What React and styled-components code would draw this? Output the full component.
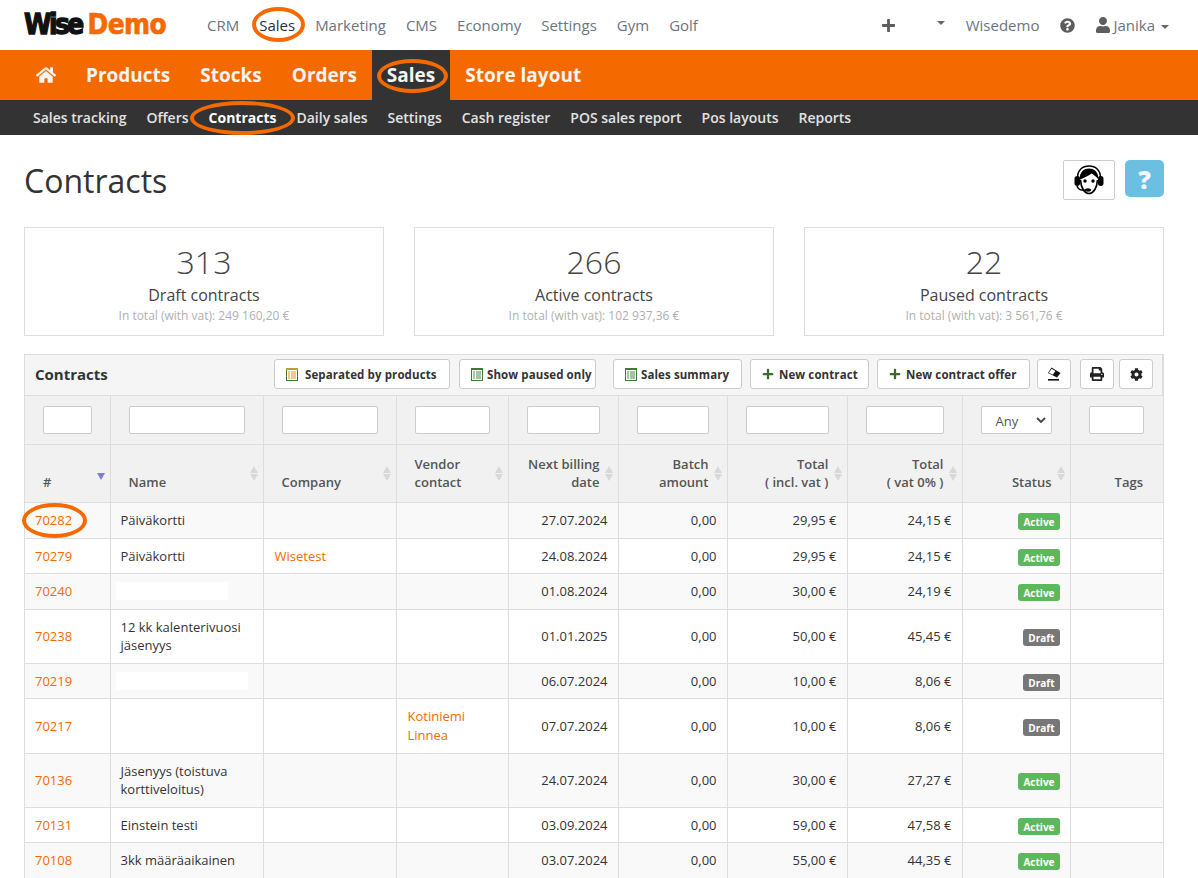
import React from 'react';
import styled, { createGlobalStyle } from 'styled-components';
import { FaCog, FaHome, FaPlus, FaPrint, FaQuestionCircle, FaUser } from 'react-icons/fa';

const GlobalStyle = createGlobalStyle`
  html, body {
    margin: 0;
    padding: 0;
    overflow: hidden;
    background: #fff;
    font-family: "Open Sans", "Liberation Sans", sans-serif;
    font-size: 13px;
    color: #333;
  }
  * { box-sizing: border-box; }
`;

const Page = styled.div`
  width: 1198px;
  height: 878px;
  overflow: hidden;
`;

const TopBar = styled.div`
  height: 50px;
  display: flex;
  align-items: center;
  padding: 0 29px 0 24px;
`;

const Logo = styled.div`
  width: 183px;
  display: flex;
  font-family: "DejaVu Sans", sans-serif;
  font-weight: 700;
  font-size: 25px;
  line-height: 50px;
  white-space: nowrap;
`;

const LogoDark = styled.span`
  display: inline-block;
  transform: scaleY(1.15);
  color: #111;
  letter-spacing: -2.6px;
  -webkit-text-stroke: 1.2px #111;
  margin-right: 6px;
`;

const LogoAccent = styled.span`
  display: inline-block;
  transform: scaleY(1.15);
  color: #f46a00;
  letter-spacing: -0.6px;
  -webkit-text-stroke: 0.6px #f46a00;
`;

const TopLinks = styled.div`
  display: flex;
  gap: 20px;
`;

const TopLink = styled.a`
  position: relative;
  font-size: 15px;
  color: ${p => (p.$active ? '#23303f' : '#6b7480')};
`;

const TopRight = styled.div`
  margin-left: auto;
  display: flex;
  align-items: center;
  height: 50px;
  color: #666;
  font-size: 15px;
`;

const Caret = styled.span`
  display: inline-block;
  width: 0;
  height: 0;
  border-left: 4px solid transparent;
  border-right: 4px solid transparent;
  border-top: 4px solid #666;
  margin-left: ${p => p.$ml || 0}px;
  margin-top: ${p => p.$mt || 0}px;
  margin-bottom: ${p => p.$mb || 0}px;
`;

const RightText = styled.span`
  color: #6b7480;
  margin-left: ${p => p.$ml || 0}px;
`;

const IconSlot = styled.span`
  display: inline-flex;
  margin-left: ${p => p.$ml || 0}px;
  color: #5d5d5d;
  font-size: ${p => p.$size || 15}px;
`;

const MainNav = styled.div`
  height: 50px;
  background: #f46a00;
  display: flex;
  padding-left: 21px;
`;

const MainItem = styled.a`
  position: relative;
  height: 50px;
  padding: 0 15px;
  display: flex;
  align-items: center;
  color: #f4f4f4;
  font-size: 19px;
  font-weight: 700;
  background: ${p => (p.$active ? '#333' : 'transparent')};
`;

const HomeItem = styled(MainItem)`
  width: 50px;
  font-size: 24px;
  padding-left: 15px;
`;

const SubNav = styled.div`
  height: 35px;
  background: #333;
  display: flex;
  align-items: center;
  gap: 20px;
  padding-left: 33px;
`;

const SubItem = styled.a`
  position: relative;
  color: ${p => (p.$active ? '#fff' : '#e2e2e2')};
  font-size: 14px;
  font-weight: ${p => (p.$active ? 700 : 600)};
`;

const Oval = styled.span`
  position: absolute;
  left: ${p => p.$l}px;
  top: ${p => p.$t}px;
  width: ${p => p.$w}px;
  height: ${p => p.$h}px;
  border: 4.5px solid #f46a00;
  border-radius: 50%;
  pointer-events: none;
`;

const Content = styled.div`
  padding: 0 34px 0 24px;
`;

const TitleRow = styled.div`
  height: 92px;
  display: flex;
  align-items: center;
  justify-content: space-between;
`;

const Title = styled.h1`
  margin: 0;
  font-size: 32px;
  font-weight: 400;
  color: #333;
  line-height: 1;
`;

const TitleActions = styled.div`
  display: flex;
  gap: 10px;
  align-items: flex-start;
  margin-top: -2px;
`;

const AgentButton = styled.div`
  width: 52px;
  height: 40px;
  border: 1px solid #ccc;
  border-radius: 2px;
  display: flex;
  align-items: center;
  justify-content: center;
`;

const HelpButton = styled.div`
  width: 39px;
  height: 37px;
  background: #6bc0e1;
  border-radius: 5px;
  color: #f0f8fb;
  font-size: 25px;
  font-weight: 800;
  display: flex;
  align-items: center;
  justify-content: center;
`;

const Stats = styled.div`
  display: grid;
  grid-template-columns: repeat(3, 360px);
  gap: 30px;
`;

const StatCard = styled.div`
  height: 109px;
  border: 1px solid #ddd;
  text-align: center;
  padding-top: 13px;
`;

const StatNumber = styled.div`
  font-size: 32px;
  line-height: 42px;
  color: #444;
  font-weight: 300;
`;

const StatLabel = styled.div`
  font-size: 16px;
  line-height: 24px;
  color: #444;
`;

const StatSum = styled.div`
  font-size: 12px;
  line-height: 18px;
  color: #b0b0b0;
`;

const Panel = styled.div`
  margin-top: 18px;
  width: 1140px;
  border: 1px solid #ddd;
  border-right-width: 2px;
  border-bottom: 0;
`;

const PanelHead = styled.div`
  height: 40px;
  background: #f5f5f5;
  display: flex;
  align-items: center;
  padding: 0 9px 2px 10px;
`;

const PanelTitle = styled.div`
  font-size: 15px;
  font-weight: 700;
  color: #333;
  margin-right: auto;
`;

const ToolButton = styled.button`
  height: 30px;
  width: ${p => p.$w}px;
  margin-left: ${p => p.$ml || 0}px;
  padding: 0 0 0 ${p => p.$pl || 11}px;
  background: #fff;
  border: 1px solid #ccc;
  border-radius: 3px;
  display: flex;
  align-items: center;
  gap: ${p => p.$gap || 5}px;
  font-family: inherit;
  font-size: 11.5px;
  font-weight: 700;
  letter-spacing: 0.1px;
  white-space: nowrap;
  color: #333;
`;

const IconButton = styled(ToolButton)`
  justify-content: center;
  padding: 0;
`;

const Table = styled.table`
  width: 1138px;
  border-collapse: collapse;
  table-layout: fixed;
`;

const FilterCell = styled.td`
  height: 49px;
  background: #f1f1f1;
  border: 1px solid #ddd;
  border-left: 0;
  padding: 0 18px;
  &:last-child { border-right: 0; padding-right: 19px; }
`;

const FilterInput = styled.div`
  height: 28px;
  background: #fff;
  border: 1px solid #ccc;
  border-radius: 2px;
`;

const FilterSelect = styled.div`
  height: 28px;
  background: #fff;
  border: 1px solid #ccc;
  border-radius: 2px;
  display: flex;
  align-items: center;
  justify-content: space-between;
  padding: 1px 5px 0 14px;
  font-size: 13px;
  color: #555;
`;

const HeadCell = styled.th`
  position: relative;
  height: 58px;
  background: #f1f1f1;
  border: 1px solid #ddd;
  border-left: 0;
  padding: 0 18px 11px;
  vertical-align: bottom;
  text-align: ${p => (p.$right ? 'right' : 'left')};
  font-size: 13px;
  font-weight: 600;
  line-height: 18px;
  color: #555;
  &:last-child { border-right: 0; padding-right: 20px; }
`;

const SortIcon = styled.span`
  position: absolute;
  right: 5px;
  top: 21px;
  display: flex;
  flex-direction: column;
  gap: 1px;
`;

const SortUp = styled.i`
  width: 0;
  height: 0;
  border-left: 4px solid transparent;
  border-right: 4px solid transparent;
  border-bottom: 7px solid #d8d8d8;
`;

const SortDown = styled.i`
  width: 0;
  height: 0;
  border-left: 4px solid transparent;
  border-right: 4px solid transparent;
  border-top: 7px solid ${p => (p.$on ? '#7c7ce0' : '#d8d8d8')};
`;

const SortedIcon = styled.span`
  position: absolute;
  right: 5px;
  top: 28px;
  display: flex;
`;

const Row = styled.tr`
  background: ${p => (p.$odd ? '#f9f9f9' : '#fff')};
`;

const Cell = styled.td`
  position: relative;
  border: 1px solid #ddd;
  border-left: 0;
  padding: 8px 10px;
  font-size: 13px;
  line-height: 1.42857;
  color: #333;
  text-align: ${p => (p.$right ? 'right' : 'left')};
  &:last-child { border-right: 0; }
`;

const BadgeCell = styled(Cell)`
  padding: 10px 10px 6px;
`;

const OrangeLink = styled.a`
  color: #f46a00;
  display: inline-block;
  padding-left: 1px;
`;

const IdLink = styled.a`
  color: #f46a00;
  display: inline-block;
`;

const Redacted = styled.div`
  width: ${p => p.$w}px;
  height: 18px;
  background: #fff;
  margin-left: -5px;
`;

const Badge = styled.span`
  display: inline-block;
  background: ${p => (p.$draft ? '#777' : '#5cb85c')};
  color: #fff;
  font-size: 10px;
  font-weight: 700;
  line-height: 12px;
  padding: 3px 5px 2px;
  border-radius: 3px;
  vertical-align: top;
`;

const columns = [85, 153, 133, 112, 110, 109, 120, 115, 108, 93];

const heads = [
  { lines: ['#'], sorted: true },
  { lines: ['Name'], sort: true },
  { lines: ['Company'], sort: true },
  { lines: ['Vendor', 'contact'], sort: true },
  { lines: ['Next billing', 'date'], sort: true, right: true },
  { lines: ['Batch', 'amount'], sort: true, right: true },
  { lines: ['Total', '( incl. vat )'], sort: true, right: true },
  { lines: ['Total', '( vat 0% )'], sort: true, right: true },
  { lines: ['Status'], sort: true, right: true },
  { lines: ['Tags'], right: true },
];

const rows = [
  { id: '70282', name: 'Päiväkortti', date: '27.07.2024', incl: '29,95 €', net: '24,15 €', status: 'Active', oval: true },
  { id: '70279', name: 'Päiväkortti', company: 'Wisetest', date: '24.08.2024', incl: '29,95 €', net: '24,15 €', status: 'Active' },
  { id: '70240', hidden: 112, date: '01.08.2024', incl: '30,00 €', net: '24,19 €', status: 'Active' },
  { id: '70238', name: '12 kk kalenterivuosi jäsenyys', date: '01.01.2025', incl: '50,00 €', net: '45,45 €', status: 'Draft' },
  { id: '70219', hidden: 132, date: '06.07.2024', incl: '10,00 €', net: '8,06 €', status: 'Draft' },
  { id: '70217', vendor: 'Kotiniemi Linnea', date: '07.07.2024', incl: '10,00 €', net: '8,06 €', status: 'Draft' },
  { id: '70136', name: 'Jäsenyys (toistuva korttiveloitus)', date: '24.07.2024', incl: '30,00 €', net: '27,27 €', status: 'Active' },
  { id: '70131', name: 'Einstein testi', date: '03.09.2024', incl: '59,00 €', net: '47,58 €', status: 'Active' },
  { id: '70108', name: '3kk määräaikainen', date: '03.07.2024', incl: '55,00 €', net: '44,35 €', status: 'Active' },
];

const ListIcon = ({ yellow }) => (
  <svg width="12" height="13" viewBox="0 0 12 13">
    <rect x="0.5" y="0.5" width="11" height="12" fill="#fff" stroke="#3f7a3a" />
    <rect x="0" y="0" width="12" height="2" fill={yellow ? '#b9a22a' : '#3f7a3a'} />
    {[3.5, 5.5, 7.5, 9.5].map(y => (
      <g key={y}>
        <rect x="2" y={y} width="2" height="1" fill={yellow ? '#d29a1c' : '#4f8a4a'} />
        <rect x="5" y={y} width="5" height="1" fill={yellow ? '#d29a1c' : '#4f8a4a'} />
      </g>
    ))}
  </svg>
);

const EraserIcon = () => (
  <svg width="14" height="14" viewBox="0 0 14 14">
    <path d="M4.5 0.5 L13.5 6 L10 10.5 L1 6 Z" fill="#111" />
    <path d="M4.6 1.8 L1.8 5.8 L5.8 7.8 L8.4 4 Z" fill="#fff" />
    <rect x="1" y="12" width="11" height="1.6" fill="#111" />
  </svg>
);

const AgentIcon = () => (
  <svg width="30" height="30" viewBox="0 0 30 30">
    <path d="M3.5 13 C3.5 5 8.5 1 15 1 C21.5 1 26.5 5 26.5 13" fill="none" stroke="#000" strokeWidth="1.5" />
    <rect x="0.5" y="11" width="5.5" height="10" rx="2.7" fill="#000" />
    <rect x="24" y="11" width="5.5" height="10" rx="2.7" fill="#000" />
    <path d="M5.5 15 C5.5 6.5 10 3.5 15 3.5 C20 3.5 24.5 6.5 24.5 15 C23 11.5 20 10.5 17.5 8.5 C14.5 11.5 10 12 5.5 15 Z" fill="#000" />
    <path d="M6.5 15 C7 23 10.5 28.5 15 28.5 C19.5 28.5 23 23 23.5 15" fill="none" stroke="#000" strokeWidth="1.7" />
    <circle cx="11" cy="16" r="1.7" fill="#000" />
    <circle cx="19" cy="16" r="1.7" fill="#000" />
    <path d="M3 21 C4 25 8 25.5 12 25" fill="none" stroke="#000" strokeWidth="1.4" />
    <ellipse cx="14" cy="25" rx="3" ry="1.7" fill="#000" />
  </svg>
);

const ChevronIcon = () => (
  <svg width="10" height="7" viewBox="0 0 10 7">
    <path d="M1 1 L5 5 L9 1" fill="none" stroke="#444" strokeWidth="1.8" />
  </svg>
);

export default function App() {
  return (
    <Page>
      <GlobalStyle />
      <TopBar>
        <Logo><LogoDark>Wise</LogoDark><LogoAccent>Demo</LogoAccent></Logo>
        <TopLinks>
          <TopLink>CRM</TopLink>
          <TopLink $active>
            Sales
            <Oval $l={-7} $t={-8} $w={53} $h={35} />
          </TopLink>
          <TopLink>Marketing</TopLink>
          <TopLink>CMS</TopLink>
          <TopLink>Economy</TopLink>
          <TopLink>Settings</TopLink>
          <TopLink>Gym</TopLink>
          <TopLink>Golf</TopLink>
        </TopLinks>
        <TopRight>
          <IconSlot $size={15}><FaPlus /></IconSlot>
          <Caret $ml={41} $mb={4} />
          <RightText $ml={21}>Wisedemo</RightText>
          <IconSlot $ml={21} $size={15}><FaQuestionCircle /></IconSlot>
          <IconSlot $ml={20} $size={16}><FaUser /></IconSlot>
          <RightText $ml={2}>Janika</RightText>
          <Caret $ml={6} $mt={3} />
        </TopRight>
      </TopBar>
      <MainNav>
        <HomeItem><FaHome /></HomeItem>
        <MainItem>Products</MainItem>
        <MainItem>Stocks</MainItem>
        <MainItem>Orders</MainItem>
        <MainItem $active>
          Sales
          <Oval $l={5} $t={9} $w={71} $h={34} />
        </MainItem>
        <MainItem>Store layout</MainItem>
      </MainNav>
      <SubNav>
        <SubItem>Sales tracking</SubItem>
        <SubItem>Offers</SubItem>
        <SubItem $active>
          Contracts
          <Oval $l={-19} $t={-7} $w={105} $h={34} />
        </SubItem>
        <SubItem>Daily sales</SubItem>
        <SubItem>Settings</SubItem>
        <SubItem>Cash register</SubItem>
        <SubItem>POS sales report</SubItem>
        <SubItem>Pos layouts</SubItem>
        <SubItem>Reports</SubItem>
      </SubNav>
      <Content>
        <TitleRow>
          <Title>Contracts</Title>
          <TitleActions>
            <AgentButton><AgentIcon /></AgentButton>
            <HelpButton>?</HelpButton>
          </TitleActions>
        </TitleRow>
        <Stats>
          <StatCard>
            <StatNumber>313</StatNumber>
            <StatLabel>Draft contracts</StatLabel>
            <StatSum>In total (with vat): 249 160,20 €</StatSum>
          </StatCard>
          <StatCard>
            <StatNumber>266</StatNumber>
            <StatLabel>Active contracts</StatLabel>
            <StatSum>In total (with vat): 102 937,36 €</StatSum>
          </StatCard>
          <StatCard>
            <StatNumber>22</StatNumber>
            <StatLabel>Paused contracts</StatLabel>
            <StatSum>In total (with vat): 3 561,76 €</StatSum>
          </StatCard>
        </Stats>
        <Panel>
          <PanelHead>
            <PanelTitle>Contracts</PanelTitle>
            <ToolButton $w={176} $gap={7}><ListIcon yellow /> Separated by products</ToolButton>
            <ToolButton $w={137} $ml={9} $gap={4}><ListIcon /> Show paused only</ToolButton>
            <ToolButton $w={129} $ml={17} $gap={4}><ListIcon /> Sales summary</ToolButton>
            <ToolButton $w={119} $ml={8}><FaPlus color="#3a6b2c" size={12} /> New contract</ToolButton>
            <ToolButton $w={153} $ml={8}><FaPlus color="#3a6b2c" size={12} /> New contract offer</ToolButton>
            <IconButton $w={34} $ml={7}><EraserIcon /></IconButton>
            <IconButton $w={34} $ml={9}><FaPrint size={14} color="#222" /></IconButton>
            <IconButton $w={34} $ml={5}><FaCog size={13} color="#222" /></IconButton>
          </PanelHead>
          <Table>
            <colgroup>
              {columns.map((w, i) => <col key={i} width={w} />)}
            </colgroup>
            <thead>
              <tr>
                {columns.map((w, i) => (
                  <FilterCell key={i}>
                    {i === 8
                      ? <FilterSelect>Any <ChevronIcon /></FilterSelect>
                      : <FilterInput />}
                  </FilterCell>
                ))}
              </tr>
              <tr>
                {heads.map((h, i) => (
                  <HeadCell key={i} $right={h.right}>
                    {h.lines.map((line, j) => <div key={j}>{line}</div>)}
                    {h.sort && <SortIcon><SortUp /><SortDown /></SortIcon>}
                    {h.sorted && <SortedIcon><SortDown $on /></SortedIcon>}
                  </HeadCell>
                ))}
              </tr>
            </thead>
            <tbody>
              {rows.map((r, i) => (
                <Row key={r.id} $odd={i % 2 === 0}>
                  <Cell>
                    <IdLink>{r.id}</IdLink>
                    {r.oval && <Oval $l={-3} $t={0} $w={65} $h={35} />}
                  </Cell>
                  <Cell>
                    {r.hidden ? <Redacted $w={r.hidden} /> : r.name}
                  </Cell>
                  <Cell>{r.company && <OrangeLink>{r.company}</OrangeLink>}</Cell>
                  <Cell>{r.vendor && <OrangeLink>{r.vendor}</OrangeLink>}</Cell>
                  <Cell $right>{r.date}</Cell>
                  <Cell $right>0,00</Cell>
                  <Cell $right>{r.incl}</Cell>
                  <Cell $right>{r.net}</Cell>
                  <BadgeCell $right><Badge $draft={r.status === 'Draft'}>{r.status}</Badge></BadgeCell>
                  <Cell />
                </Row>
              ))}
            </tbody>
          </Table>
        </Panel>
      </Content>
    </Page>
  );
}
